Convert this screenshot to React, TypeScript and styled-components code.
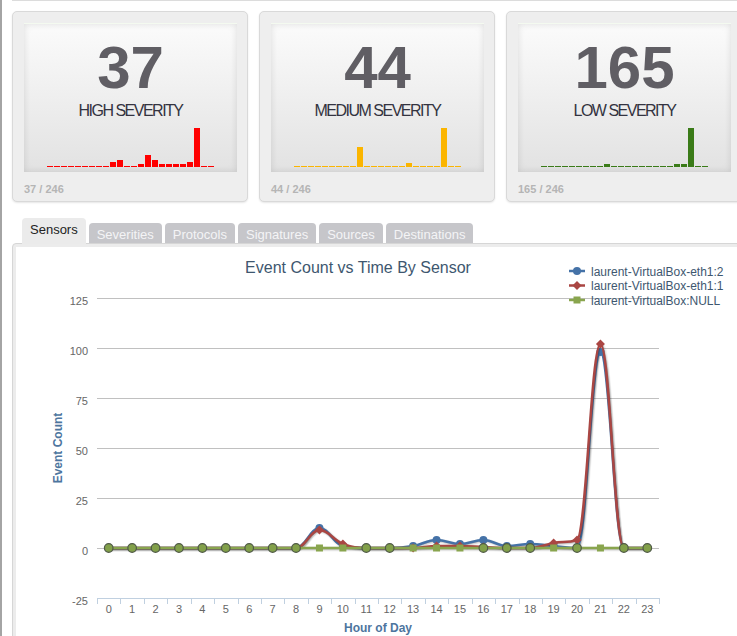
import React from 'react';
import styled, { createGlobalStyle } from 'styled-components';

const GlobalStyle = createGlobalStyle`
  html, body {
    margin: 0;
    padding: 0;
    overflow: hidden;
    background: #ffffff;
  }
  body {
    font-family: "Liberation Sans", Arial, sans-serif;
  }
`;

const Page = styled.div`
  width: 737px;
  height: 636px;
  box-sizing: border-box;
  border-left: 2px solid #a4a4a4;
  overflow: hidden;
`;

const Content = styled.div`
  padding-left: 10px;
`;

const TopRule = styled.div`
  height: 1px;
  background: #dcdcdc;
`;

const CardsRow = styled.div`
  display: flex;
  gap: 11px;
  margin-top: 10px;
`;

const Card = styled.div`
  flex: none;
  width: 236px;
  height: 191px;
  box-sizing: border-box;
  border: 1px solid #d9d9d9;
  border-radius: 5px;
  background: #eeeeee;
  box-shadow: 0 1px 2px rgba(0, 0, 0, 0.1);
  padding: 11px 10px 0 11px;
  display: flex;
  flex-direction: column;
`;

const CardInner = styled.div`
  height: 149px;
  box-sizing: border-box;
  padding-top: 14px;
  display: flex;
  flex-direction: column;
  align-items: center;
  background: linear-gradient(#fbfbfb, #e2e2e2);
  border-top: 1px solid #f4faf0;
  box-shadow: inset 0 0 7px rgba(0, 0, 0, 0.12);
`;

const BigNumber = styled.div`
  font-size: 60px;
  line-height: 60px;
  font-weight: 700;
  color: #605e64;
`;

const SeverityLabel = styled.div`
  margin-top: 5px;
  font-size: 16px;
  line-height: 16px;
  letter-spacing: -1.5px;
  color: #333340;
  text-transform: uppercase;
`;

const Spark = styled.div`
  margin-top: auto;
  margin-bottom: 5px;
  display: flex;
  align-items: flex-end;
  gap: 1px;
  height: 40px;
`;

const SparkBar = styled.div<{ $h: number; $c: string }>`
  width: 6px;
  height: ${(p) => p.$h}px;
  background: ${(p) => p.$c};
`;

const CardFooter = styled.div`
  margin-top: 10px;
  font-size: 11px;
  line-height: 14px;
  font-weight: 700;
  color: #b5b5b5;
`;

const TabsRow = styled.div`
  display: flex;
  align-items: flex-end;
  gap: 3px;
  margin-top: 16px;
  padding-left: 10px;
`;

const Tab = styled.div<{ $active?: boolean }>`
  box-sizing: border-box;
  height: ${(p) => (p.$active ? 26 : 20)}px;
  margin-bottom: ${(p) => (p.$active ? -1 : 0)}px;
  padding: ${(p) => (p.$active ? 3 : 3)}px 8px 0;
  font-size: 13px;
  line-height: 18px;
  border-radius: 4px 4px 0 0;
  background: ${(p) => (p.$active ? '#ebebeb' : '#c6c6ca')};
  color: ${(p) => (p.$active ? '#222222' : '#f4f4f6')};
  position: relative;
  z-index: ${(p) => (p.$active ? 1 : 0)};
`;

const Panel = styled.div`
  width: 760px;
  box-sizing: border-box;
  border: 1px solid #d6d6d6;
  border-radius: 4px;
  background: #ececec;
  padding: 3px;
`;

const ChartArea = styled.div`
  background: #ffffff;
  height: 400px;
`;

const ChartSvg = styled.svg`
  display: block;
  font-family: "Liberation Sans", Arial, sans-serif;
`;

const fill = (n: number, v: number) => Array.from({ length: n }, () => v);

const Z = 1.5;

const severities = [
  {
    count: 37,
    label: 'High Severity',
    color: '#ff0000',
    bars: [...fill(9, Z), 5, 7, Z, Z, 3, 12, 7, 3, 3, 3, 3, 5, 39, Z, Z],
  },
  {
    count: 44,
    label: 'Medium Severity',
    color: '#fbb500',
    bars: [...fill(9, Z), 20, Z, Z, Z, Z, Z, Z, 4, Z, Z, Z, Z, 39, Z, Z],
  },
  {
    count: 165,
    label: 'Low Severity',
    color: '#3a7b18',
    bars: [...fill(9, Z), 3, ...fill(9, Z), 3, 3, 39, Z, Z],
  },
];

const tabs = ['Sensors', 'Severities', 'Protocols', 'Signatures', 'Sources', 'Destinations'];

const plotLeft = 81;
const plotTop = 51;
const plotWidth = 562;
const plotHeight = 300;
const yMin = -25;
const yMax = 125;
const catW = plotWidth / 24;
const px = (i: number) => plotLeft + (i + 0.5) * catW;
const py = (v: number) => plotTop + ((yMax - v) / (yMax - yMin)) * plotHeight;

type Sym = 'circle' | 'diamond' | 'square' | 'dot';

const series: { name: string; color: string; symbol: Sym; data: number[] }[] = [
  {
    name: 'laurent-VirtualBox-eth1:2',
    color: '#4572A7',
    symbol: 'circle',
    data: [0, 0, 0, 0, 0, 0, 0, 0, 0, 10, 1, 0, 0, 1, 4, 2, 4, 1, 2, 1, 0, 98, 0, 0],
  },
  {
    name: 'laurent-VirtualBox-eth1:1',
    color: '#AA4643',
    symbol: 'diamond',
    data: [0, 0, 0, 0, 0, 0, 0, 0, 0, 9, 2, 0, 0, 0, 1, 1, 0.5, 0, 0, 2.5, 4, 102, 0, 0],
  },
  {
    name: 'laurent-VirtualBox:NULL',
    color: '#89A54E',
    symbol: 'square',
    data: fill(24, 0),
  },
];

const squareHours = [9, 10, 13, 14, 15, 19, 21];

function splinePath(vals: number[]) {
  const pts = vals.map((v, i) => ({ x: px(i), y: py(v) }));
  const sm = 1.5;
  const den = sm + 1;
  const conts = pts.map((p, i) => {
    const prev = pts[i - 1];
    const next = pts[i + 1];
    if (!prev || !next) return { lx: p.x, ly: p.y, rx: p.x, ry: p.y };
    const lx = (sm * p.x + prev.x) / den;
    let ly = (sm * p.y + prev.y) / den;
    const rx = (sm * p.x + next.x) / den;
    let ry = (sm * p.y + next.y) / den;
    const corr = ((ry - ly) * (rx - p.x)) / (rx - lx) + p.y - ry;
    ly += corr;
    ry += corr;
    if (ly > prev.y && ly > p.y) {
      ly = Math.max(prev.y, p.y);
      ry = 2 * p.y - ly;
    } else if (ly < prev.y && ly < p.y) {
      ly = Math.min(prev.y, p.y);
      ry = 2 * p.y - ly;
    }
    if (ry > next.y && ry > p.y) {
      ry = Math.max(next.y, p.y);
      ly = 2 * p.y - ry;
    } else if (ry < next.y && ry < p.y) {
      ry = Math.min(next.y, p.y);
      ly = 2 * p.y - ry;
    }
    return { lx, ly, rx, ry };
  });
  let d = `M${pts[0].x.toFixed(2)},${pts[0].y.toFixed(2)}`;
  for (let i = 1; i < pts.length; i++) {
    const a = conts[i - 1];
    const b = conts[i];
    d += ` C${a.rx.toFixed(2)},${a.ry.toFixed(2)} ${b.lx.toFixed(2)},${b.ly.toFixed(2)} ${pts[i].x.toFixed(2)},${pts[i].y.toFixed(2)}`;
  }
  return d;
}

function Marker({ sym, x, y, color }: { sym: Sym; x: number; y: number; color: string }) {
  if (sym === 'circle') return <circle cx={x} cy={y} r={4} fill={color} />;
  if (sym === 'diamond')
    return <path d={`M${x},${y - 4.5} L${x + 4.5},${y} L${x},${y + 4.5} L${x - 4.5},${y} Z`} fill={color} />;
  if (sym === 'square') return <rect x={x - 3.5} y={y - 3.5} width={7} height={7} fill={color} />;
  return <circle cx={x} cy={y} r={4.3} fill="#82a04a" stroke="#505a46" strokeWidth={1.2} />;
}

function Chart() {
  const gridVals = [125, 100, 75, 50, 25, 0];
  return (
    <ChartSvg width={720} height={400} viewBox="0 0 720 400">
      <text x={342} y={26} textAnchor="middle" fontSize={16} fill="#3E576F">
        Event Count vs Time By Sensor
      </text>

      {gridVals.map((v) => (
        <line
          key={v}
          x1={plotLeft}
          x2={plotLeft + plotWidth}
          y1={Math.round(py(v)) + 0.5}
          y2={Math.round(py(v)) + 0.5}
          stroke="#C0C0C0"
          strokeWidth={1}
        />
      ))}
      {[...gridVals, -25].map((v) => (
        <text key={`l${v}`} x={72} y={py(v) + 7} textAnchor="end" fontSize={11} fill="#666666">
          {v}
        </text>
      ))}

      <line
        x1={plotLeft}
        x2={plotLeft + plotWidth}
        y1={Math.round(py(-25)) + 0.5}
        y2={Math.round(py(-25)) + 0.5}
        stroke="#C0D0E0"
        strokeWidth={1}
      />
      {Array.from({ length: 25 }, (_, k) => {
        const x = Math.round(plotLeft + k * catW) + 0.5;
        const y0 = Math.round(py(-25));
        return <line key={`t${k}`} x1={x} x2={x} y1={y0} y2={y0 + 6} stroke="#C0D0E0" strokeWidth={1} />;
      })}
      {Array.from({ length: 24 }, (_, i) => (
        <text key={`x${i}`} x={px(i)} y={366} textAnchor="middle" fontSize={11} fill="#666666">
          {i}
        </text>
      ))}

      <text x={plotLeft + plotWidth / 2} y={385} textAnchor="middle" fontSize={12} fontWeight={700} fill="#4D759E">
        Hour of Day
      </text>
      <text
        x={0}
        y={0}
        transform={`translate(46 ${plotTop + plotHeight / 2}) rotate(-90)`}
        textAnchor="middle"
        fontSize={12}
        fontWeight={700}
        fill="#4D759E"
      >
        Event Count
      </text>

      {series.map((s) => {
        const d = splinePath(s.data);
        return (
          <g key={s.name}>
            {[1, 2, 3].map((k) => (
              <path
                key={k}
                d={d}
                fill="none"
                stroke="#000"
                strokeOpacity={0.05 * k}
                strokeWidth={7 - 2 * k}
                transform="translate(1 1)"
                strokeLinejoin="round"
              />
            ))}
            <path d={d} fill="none" stroke={s.color} strokeWidth={2.5} strokeLinejoin="round" />
            {s.data.map((v, i) => {
              const sym: Sym = s.symbol === 'square' && !squareHours.includes(i) ? 'dot' : s.symbol;
              return <Marker key={i} sym={sym} x={px(i)} y={py(v)} color={s.color} />;
            })}
          </g>
        );
      })}

      {series.map((s, i) => {
        const cy = 24 + i * 14.5;
        return (
          <g key={`lg${s.name}`}>
            <line x1={553} x2={569} y1={cy} y2={cy} stroke={s.color} strokeWidth={2.5} />
            <Marker sym={s.symbol} x={561} y={cy} color={s.color} />
            <text x={575} y={cy + 4.5} fontSize={12} fill="#3E576F">
              {s.name}
            </text>
          </g>
        );
      })}
    </ChartSvg>
  );
}

export default function App() {
  return (
    <>
      <GlobalStyle />
      <Page>
        <Content>
          <TopRule />
          <CardsRow>
            {severities.map((s) => (
              <Card key={s.label}>
                <CardInner>
                  <BigNumber>{s.count}</BigNumber>
                  <SeverityLabel>{s.label}</SeverityLabel>
                  <Spark>
                    {s.bars.map((h, i) => (
                      <SparkBar key={i} $h={h} $c={s.color} />
                    ))}
                  </Spark>
                </CardInner>
                <CardFooter>
                  {s.count} / 246
                </CardFooter>
              </Card>
            ))}
          </CardsRow>
          <TabsRow>
            {tabs.map((t, i) => (
              <Tab key={t} $active={i === 0}>
                {t}
              </Tab>
            ))}
          </TabsRow>
          <Panel>
            <ChartArea>
              <Chart />
            </ChartArea>
          </Panel>
        </Content>
      </Page>
    </>
  );
}
